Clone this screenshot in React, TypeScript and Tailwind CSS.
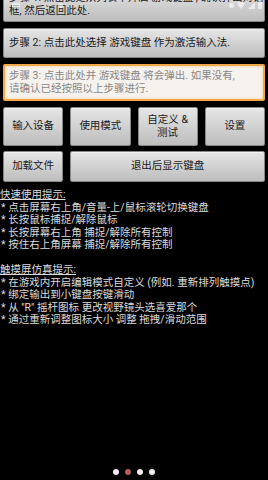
import type { ReactNode } from "react";

const font = { fontFamily: '"Roboto", "Noto Sans CJK SC", sans-serif' };

function Btn({ children, className = "" }: { children: ReactNode; className?: string }) {
  return (
    <div
      className={`flex items-center rounded-[2px] border border-[#878787] bg-gradient-to-b from-[#e6e6e6] to-[#bdbdbd] text-[10.5px] leading-[12.5px] text-[#1a1a1a] shadow-[inset_0_1px_0_#f2f2f2] ${className}`}
    >
      {children}
    </div>
  );
}

const quick = [
  "点击屏幕右上角/音量-上/鼠标滚轮切换键盘",
  "长按鼠标捕捉/解除鼠标",
  "长按屏幕右上角 捕捉/解除所有控制",
  "按住右上角屏幕 捕捉/解除所有控制",
];

const touch = [
  "在游戏内开启编辑模式自定义 (例如. 重新排列触摸点)",
  "绑定输出到小键盘按键滑动",
  '从 "R" 摇杆图标 更改视野镜头选喜爱那个',
  "通过重新调整图标大小 调整 拖拽/滑动范围",
];

export default function App() {
  return (
    <div className="relative flex h-[480px] w-[268px] flex-col overflow-hidden bg-black" style={font}>
      {/* status bar, washed out over the first button */}
      <div className="pointer-events-none absolute left-0 right-0 top-0 flex h-[10px] items-center justify-between px-[6px] opacity-60">
        <div className="flex items-center gap-[38px] pl-[6px]">
          <span className="h-[5px] w-[8px] rounded-[1px] bg-white" />
          <span className="h-[5px] w-[5px] rounded-full bg-white" />
        </div>
        <div className="flex items-center gap-[3px]">
          <span className="h-[5px] w-[5px] rounded-full bg-white" />
          <svg width="8" height="7" viewBox="0 0 8 7">
            <path d="M0 1.5 A6 6 0 0 1 8 1.5 L4 7 Z" fill="#fff" />
          </svg>
          <svg width="7" height="7" viewBox="0 0 7 7">
            <path d="M7 0 V7 H0 Z" fill="#fff" />
          </svg>
          <span className="h-[8px] w-[4px] rounded-[1px] bg-white" />
        </div>
      </div>

      <div className="-mt-[13px] flex flex-col gap-[6px] px-[3px]">
        <Btn className="min-h-[34px] overflow-hidden px-[5px] py-[4px]">
          <span>
            <span className="block whitespace-nowrap">步骤 1: 点击此处从列表中开启 游戏键盘 , 确认弹出对话</span>
            <span className="block">框, 然后返回此处.</span>
          </span>
        </Btn>
        <Btn className="min-h-[30px] px-[5px] py-[5px]">
          <span>步骤 2: 点击此处选择 游戏键盘 作为激活输入法.</span>
        </Btn>
        <div className="flex min-h-[36px] items-center rounded-[2px] border-2 border-[#f0a848] bg-[#f6f2ee] px-[4px] py-[4px] text-[10.5px] leading-[12.5px] text-[#878787] shadow-[inset_0_0_3px_#f6c98a]">
          <span>
            <span className="block whitespace-nowrap">步骤 3: 点击此处并 游戏键盘 将会弹出. 如果没有,</span>
            <span className="block">请确认已经按照以上步骤进行.</span>
          </span>
        </div>

        <div className="grid grid-cols-4 gap-x-[7px] gap-y-[5px]">
          <Btn className="h-[39px] justify-center text-center">输入设备</Btn>
          <Btn className="h-[39px] justify-center text-center">使用模式</Btn>
          <Btn className="h-[39px] justify-center text-center">
            <span>
              自定义 &amp;
              <br />
              测试
            </span>
          </Btn>
          <Btn className="h-[39px] justify-center text-center">设置</Btn>
          <Btn className="h-[31px] justify-center text-center">加载文件</Btn>
          <Btn className="col-span-3 h-[31px] justify-center text-center">退出后显示键盘</Btn>
        </div>
      </div>

      <div className="mt-[7px] text-[10.5px] leading-[12.5px] text-[#dcdcdc]">
        <div className="underline">快速使用提示:</div>
        {quick.map((t) => (
          <div key={t} className="pl-[1px]">
            * {t}
          </div>
        ))}
        <div className="h-[12.5px]" />
        <div className="underline">触摸屏仿真提示:</div>
        {touch.map((t) => (
          <div key={t} className="pl-[1px]">
            * {t}
          </div>
        ))}
      </div>

      <div className="mt-auto flex justify-center gap-[6px] pb-[5px]">
        <span className="h-[6px] w-[6px] rounded-full bg-[#eeeeee]" />
        <span className="h-[6px] w-[6px] rounded-full bg-[#b45c5c]" />
        <span className="h-[6px] w-[6px] rounded-full bg-[#eeeeee]" />
        <span className="h-[6px] w-[6px] rounded-full bg-[#eeeeee]" />
      </div>
    </div>
  );
}
